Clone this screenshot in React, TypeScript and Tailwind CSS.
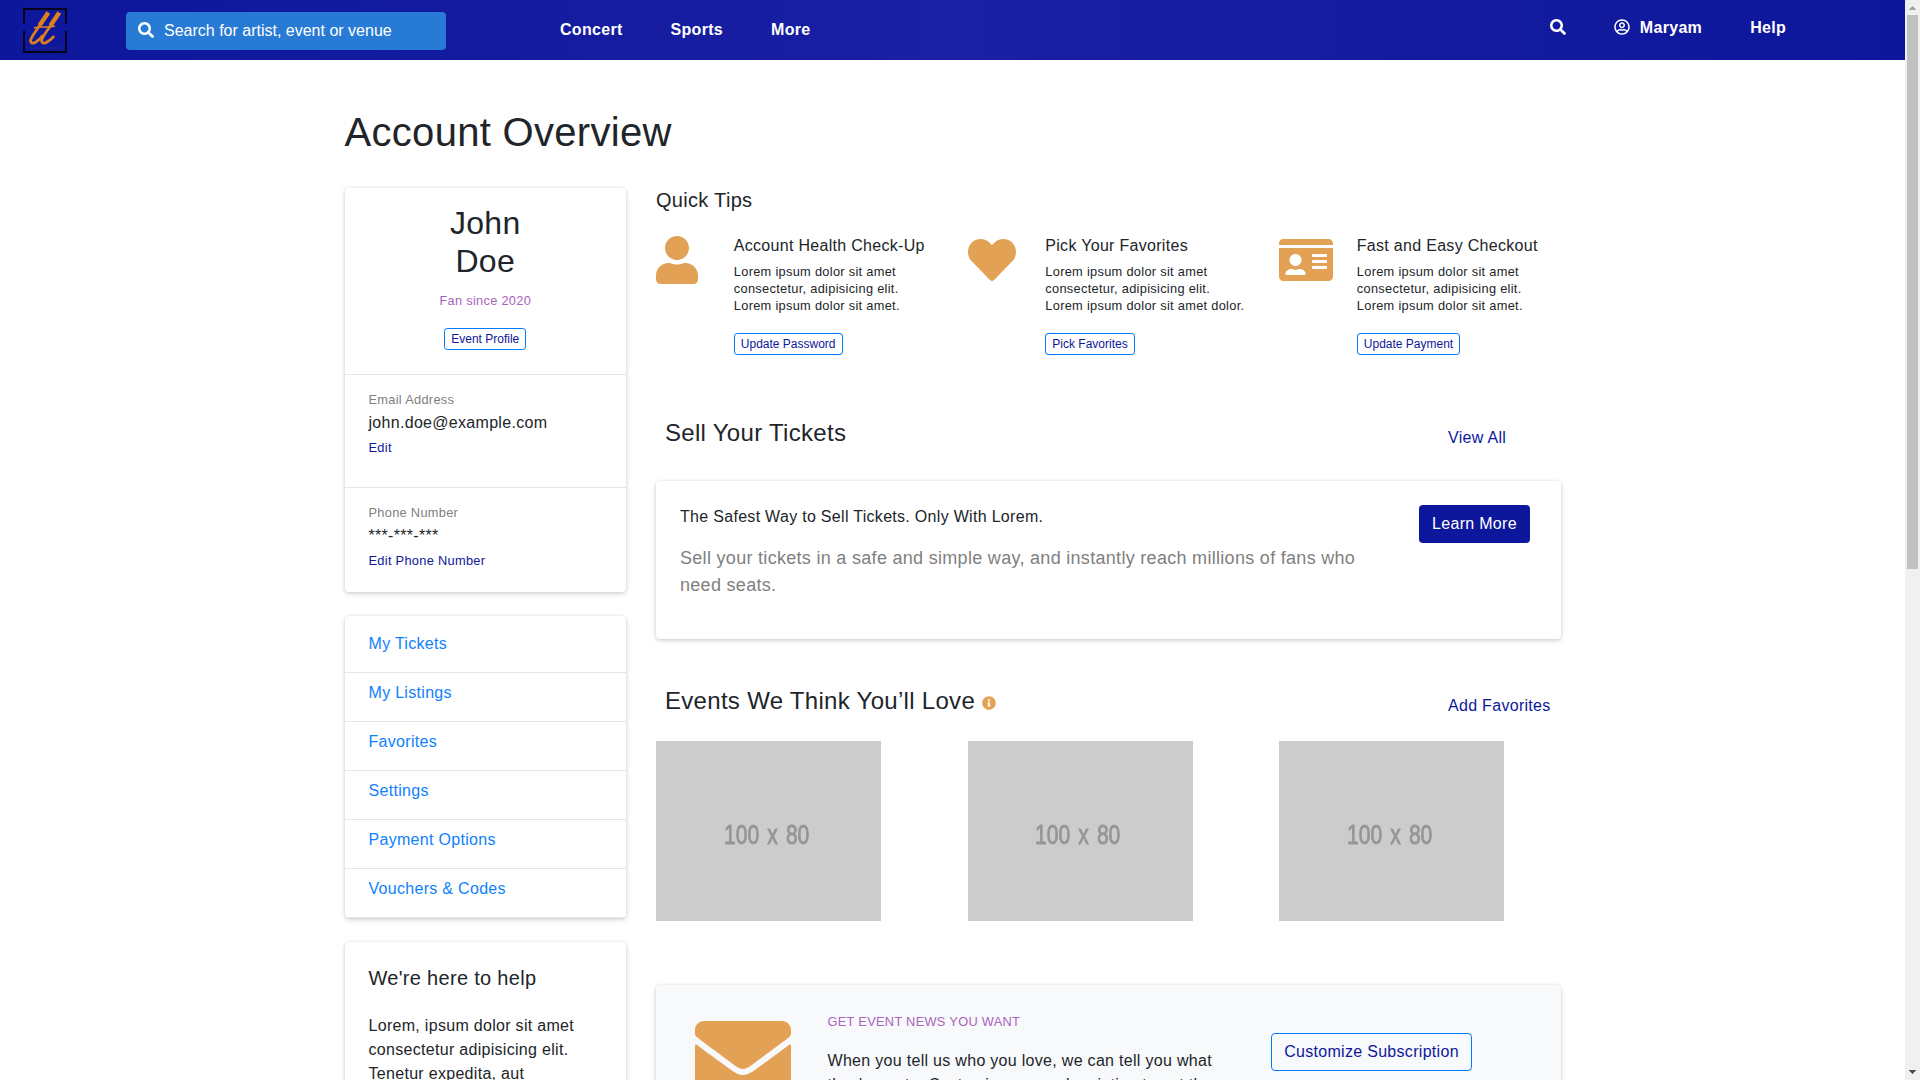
import React from "react";
import type { ReactNode } from "react";
import { FaSearch, FaRegUserCircle, FaUser, FaHeart, FaIdCard, FaInfoCircle, FaEnvelope } from "react-icons/fa";

const CARD =
  "rounded-[4px] shadow-[0_2px_5px_rgba(0,0,0,0.15),0_0_3px_rgba(0,0,0,0.1)]";

function Logo() {
  return (
    <svg className="mt-2 ml-[23px] h-[45px] w-[44px] shrink-0" viewBox="0 0 44 45" fill="none">
      <path d="M1 16V1H43V15.5M43 23V44H1V23" stroke="#03041c" strokeWidth="2" />
      <g stroke="#dd7e20" strokeLinejoin="round">
        <path d="M25 6C20 14 11 24 8 31C6.5 35.5 10 36 13 34C16 32 18 30 20 27" strokeWidth="2.8" />
        <path d="M36 6C31 14 22 24 19 31C17.5 35.5 21 36 24 34C27 32 29 31 31 28" strokeWidth="2.8" />
        <path d="M25.3 4.5L16.5 17.5M36.3 4.5L27.5 17.5" strokeWidth="4.4" />
        <path d="M11 20C17 18 25 20 32 18" strokeWidth="1.6" />
      </g>
      <text x="7.5" y="41.5" fontSize="3.6" letterSpacing="0.7" fill="#4b3068" fontFamily="Liberation Sans">
        TEN TICKETS
      </text>
    </svg>
  );
}

function Header() {
  return (
    <header className="flex h-[60px] items-start bg-[linear-gradient(90deg,#0d179b,#1a1fa3_50%,#0d179b)] text-white">
      <Logo />
      <div className="mt-3 ml-[59px] flex h-[38px] w-[320px] items-center rounded-[4px] bg-[#277bd5] pl-3 tracking-normal">
        <FaSearch className="-mt-[3px] size-4" />
        <span className="ml-[10px] text-base leading-6">Search for artist, event or venue</span>
      </div>
      <nav className="mt-[18px] ml-[114px] flex gap-12 font-bold">
        <a>Concert</a>
        <a>Sports</a>
        <a>More</a>
      </nav>
      <div className="mt-[16px] mr-[119px] ml-auto flex font-bold">
        <FaSearch className="mt-[3px] size-4" />
        <span className="ml-12 flex">
          <FaRegUserCircle className="mt-[3px] mr-[10px] size-4" />
          Maryam
        </span>
        <span className="ml-12">Help</span>
      </div>
    </header>
  );
}

function SmallButton({ children }: { children: ReactNode }) {
  return (
    <button className="block h-[22px] rounded-[3.2px] border border-[#007bff] px-[6px] text-[12px] leading-[18px] tracking-normal whitespace-nowrap text-[#0d179b]">
      {children}
    </button>
  );
}

function Contact({ label, value, action }: { label: string; value: string; action: string }) {
  return (
    <div className="pl-6">
      <div className="text-[12.8px] leading-[20px] text-[#808080]">{label}</div>
      <div className="mt-px leading-6">{value}</div>
      <div className="mt-[3px] text-[12.8px] leading-[20px] text-[#0d179b]">{action}</div>
    </div>
  );
}

const MENU = ["My Tickets", "My Listings", "Favorites", "Settings", "Payment Options", "Vouchers & Codes"];

function Sidebar() {
  return (
    <aside className="flex w-[281.5px] shrink-0 flex-col gap-6">
      <section className={`h-[404px] ${CARD}`}>
        <div className="flex h-[187px] flex-col items-center border-b border-[#e6e6e6] pt-4">
          <h2 className="text-center text-[32px] leading-[38.4px]">
            John
            <br />
            Doe
          </h2>
          <p className="mt-[10px] mb-[18px] text-[12.8px] leading-[19.2px] text-[#a865be]">Fan since 2020</p>
          <SmallButton>Event Profile</SmallButton>
        </div>
        <div className="h-[113px] border-b border-[#e6e6e6] pt-[15px]">
          <Contact label="Email Address" value="john.doe@example.com" action="Edit" />
        </div>
        <div className="pt-[15px]">
          <Contact label="Phone Number" value="***-***-***" action="Edit Phone Number" />
        </div>
      </section>
      <section className={`pt-2 ${CARD}`}>
        {MENU.map((m) => (
          <a key={m} className="block h-[49px] border-b border-[#e6e6e6] pt-2 pl-6 leading-6 text-[#0f81fb]">
            {m}
          </a>
        ))}
      </section>
      <section className={`h-[300px] px-6 pt-6 ${CARD}`}>
        <h5 className="mb-6 text-xl leading-6">We're here to help</h5>
        <p className="leading-6">Lorem, ipsum dolor sit amet consectetur adipisicing elit. Tenetur expedita, aut</p>
      </section>
    </aside>
  );
}

interface Tip {
  icon: ReactNode;
  title: string;
  last: string;
  button: string;
}

const TIPS: Tip[] = [
  { icon: <FaUser className="h-12 w-[42px]" />, title: "Account Health Check-Up", last: "Lorem ipsum dolor sit amet.", button: "Update Password" },
  { icon: <FaHeart className="size-12" />, title: "Pick Your Favorites", last: "Lorem ipsum dolor sit amet dolor.", button: "Pick Favorites" },
  { icon: <FaIdCard className="h-12 w-[54px]" />, title: "Fast and Easy Checkout", last: "Lorem ipsum dolor sit amet.", button: "Update Payment" },
];

function QuickTips() {
  return (
    <section>
      <h5 className="text-xl leading-6">Quick Tips</h5>
      <div className="mt-6 -mr-[29.5px] grid h-[182px] grid-cols-3">
        {TIPS.map((t) => (
          <div key={t.title} className="flex">
            <div className="w-[77.8px] shrink-0 text-[#e3a155]">{t.icon}</div>
            <div>
              <h6 className="leading-[19.2px]">{t.title}</h6>
              <p className="mt-[8px] mb-[18.8px] text-[12.8px] leading-[17px] whitespace-nowrap">
                Lorem ipsum dolor sit amet
                <br />
                consectetur, adipisicing elit.
                <br />
                {t.last}
              </p>
              <SmallButton>{t.button}</SmallButton>
            </div>
          </div>
        ))}
      </div>
    </section>
  );
}

function SectionTitle({ title, link }: { title: ReactNode; link: string }) {
  return (
    <div className="flex h-[31px] pl-[9px]">
      <h4 className="flex w-[783px] text-2xl leading-[29px]">{title}</h4>
      <a className="mt-2 leading-6 whitespace-nowrap text-[#0d179b]">{link}</a>
    </div>
  );
}

function Placeholder() {
  return (
    <div className="flex h-[180px] w-[225.3px] items-center justify-center bg-[#cccccc] text-[28.5px] leading-none tracking-normal text-[#969696]">
      <span className="mt-[7px] -ml-[4px] scale-x-[0.74] [word-spacing:3px] whitespace-nowrap blur-[0.7px] [-webkit-text-stroke:0.9px_#969696]">
        100 x 80
      </span>
    </div>
  );
}

function Main() {
  return (
    <main className="w-[905px] shrink-0">
      <QuickTips />
      <SectionTitle title="Sell Your Tickets" link="View All" />
      <section className={`mt-[32px] flex h-[158px] items-start pt-6 pl-6 ${CARD}`}>
        <div className="w-[739px] pr-8">
          <h6 className="leading-6">The Safest Way to Sell Tickets. Only With Lorem.</h6>
          <p className="mt-4 text-lg leading-[27px] text-[#808080]">
            Sell your tickets in a safe and simple way, and instantly reach millions of fans who need seats.
          </p>
        </div>
        <button className="h-[38px] w-[111px] rounded-[4px] bg-[#0d179b] text-base leading-6 text-white">Learn More</button>
      </section>
      <div className="mt-[47px]">
        <SectionTitle
          title={
            <>
              Events We Think You’ll Love
              <FaInfoCircle className="mt-[10px] ml-[7px] size-[14px] text-[#e3a155]" />
            </>
          }
          link="Add Favorites"
        />
      </div>
      <div className="mt-[24px] -mr-[29.5px] grid grid-cols-3">
        <Placeholder />
        <Placeholder />
        <Placeholder />
      </div>
      <section className={`mt-[64px] flex h-[240px] items-start bg-[#f8f9fb] pl-[39px] ${CARD}`}>
        <FaEnvelope className="mt-[24px] size-24 shrink-0 text-[#e3a155]" />
        <div className="mt-[27px] ml-[36.5px] w-[400px]">
          <p className="text-[12.8px] leading-[19.2px] text-[#a865be]">GET EVENT NEWS YOU WANT</p>
          <p className="mt-[18px] leading-6">
            When you tell us who you love, we can tell you what they're up to. Customize your subscription to get the
          </p>
        </div>
        <button className="mt-[48px] ml-[43.5px] h-[38px] w-[201px] rounded-[4px] border border-[#007bff] text-base text-[#0d179b]">
          Customize Subscription
        </button>
      </section>
    </main>
  );
}

function Scrollbar() {
  return (
    <div className="flex w-[15px] shrink-0 flex-col items-center bg-[#f0f0f0]">
      <svg className="h-[15px] w-[15px]" viewBox="0 0 15 15" shapeRendering="crispEdges">
        <path d="M4 10L7.5 6L11 10Z" fill="#a3a3a3" />
      </svg>
      <div className="h-[554px] w-[11px] bg-[#c1c1c1]" />
      <svg className="mt-auto h-[15px] w-[15px]" viewBox="0 0 15 15" shapeRendering="crispEdges">
        <path d="M4 5L7.5 9L11 5Z" fill="#505050" />
      </svg>
    </div>
  );
}

export default function App() {
  return (
    <div className="flex h-[1080px] w-[1920px] overflow-hidden bg-white font-['Liberation_Sans',sans-serif] text-base leading-6 tracking-[0.3px] text-[#212529]">
      <div className="h-[1080px] w-[1905px] overflow-hidden">
        <Header />
        <div className="pl-[344.5px]">
          <h1 className="mt-[48px] text-[40px] leading-[48px]">Account Overview</h1>
          <div className="mt-8 flex gap-[30px]">
            <Sidebar />
            <Main />
          </div>
        </div>
      </div>
      <Scrollbar />
    </div>
  );
}
